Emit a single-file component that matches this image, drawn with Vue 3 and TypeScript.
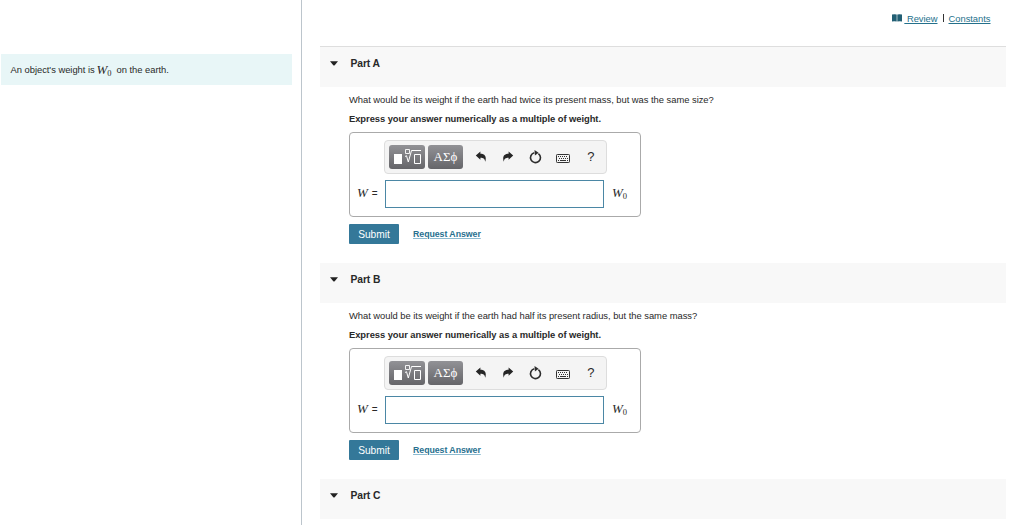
<script setup lang="ts">
interface Part {
  id: string
  question?: string
}

const instruction = 'Express your answer numerically as a multiple of weight.'

const parts: Part[] = [
  { id: 'A', question: 'What would be its weight if the earth had twice its present mass, but was the same size?' },
  { id: 'B', question: 'What would be its weight if the earth had half its present radius, but the same mass?' },
  { id: 'C' },
]
</script>

<template>
  <div class="page">
    <aside class="sidebar">
      <div class="prompt">
        <span class="prompt-start">An object's weight is</span>
        <span class="math"><i>W</i><sub>0</sub></span>
        <span class="prompt-end">on the earth.</span>
      </div>
    </aside>

    <main class="content">
      <nav class="links">
        <svg class="book" width="10" height="8" viewBox="0 0 10 8">
          <path d="M0 .6Q2.6 0 4.7 .6V7.6Q2.6 7 0 7.5ZM5.3 .6Q7.4 0 10 .6V7.5Q7.4 7 5.3 7.6Z" fill="#225f74" />
        </svg>
        <a class="review">&nbsp;Review</a>
        <span class="divider"></span>
        <a class="constants">Constants</a>
      </nav>

      <section v-for="part in parts" :key="part.id" class="part">
        <header class="part-header">
          <svg width="8" height="5" viewBox="0 0 8 5"><path d="M0 .3H8L4.7 4.2Q4 4.8 3.3 4.2Z" fill="#222" /></svg>
          <h2>Part {{ part.id }}</h2>
        </header>

        <div v-if="part.question" class="part-body">
          <p class="question">{{ part.question }}</p>
          <p class="instruction">{{ instruction }}</p>

          <div class="answer-box">
            <div class="toolbar">
              <button class="tool-dark">
                <svg width="36" height="24" viewBox="0 0 36 24" fill="none" stroke="#fff">
                  <path d="M5 9H13V19H5Z" fill="#fff" stroke="none" />
                  <path d="M16.5 4.5H20.5V8.5H16.5Z" stroke-width=".9" />
                  <path d="M16 11.5L17.5 10.7L19.3 17L22.5 5.5H32" stroke-width="1" />
                  <path d="M25.5 9.5H31.5V18.5H25.5Z" stroke-width="1" />
                </svg>
              </button>
              <button class="tool-dark greek">ΑΣϕ</button>
              <div class="tool-icons">
                <svg width="12" height="12" viewBox="0 0 12 12">
                  <path d="M.8 4.6L5.4 .4V2.7C9.6 2.7 11.9 5.2 10.3 10.8C9.6 7.6 8.3 6.8 5.4 6.8V8.8Z" fill="#262626" />
                </svg>
                <svg width="12" height="12" viewBox="0 0 12 12">
                  <path d="M11.2 4.6L6.6 .4V2.7C2.4 2.7 .1 5.2 1.7 10.8C2.4 7.6 3.7 6.8 6.6 6.8V8.8Z" fill="#262626" />
                </svg>
                <svg width="13" height="14" viewBox="0 0 13 14">
                  <path d="M9.4 3.6A5 5 0 1 1 5.3 2.8" fill="none" stroke="#2c2c2c" stroke-width="1.6" />
                  <path d="M5.5 0L9.6 2.7L5.9 5.4Z" fill="#2c2c2c" />
                </svg>
                <svg class="keyboard" width="14" height="9" viewBox="0 0 14 9" fill="none" stroke="#333">
                  <rect x=".5" y=".5" width="13" height="8" rx=".8" />
                  <path d="M2 2.5H12M3 4.5H12" stroke-dasharray="1 1" />
                  <path d="M2 6.5H3M4 6.5H10M11 6.5H12" />
                </svg>
                <span class="help">?</span>
              </div>
            </div>
            <div class="answer-row">
              <span class="label math"><i>W</i><span class="equals">=</span></span>
              <input type="text" class="answer-input">
              <span class="unit math"><i>W</i><sub>0</sub></span>
            </div>
          </div>

          <div class="actions">
            <button class="submit">Submit</button>
            <a class="request">Request Answer</a>
          </div>
        </div>
      </section>
    </main>
  </div>
</template>

<style>
body {
  background: #fff;
  overflow: hidden;
}
</style>

<style scoped>
.page {
  display: flex;
  height: 525px;
  overflow: hidden;
  font-family: "Liberation Sans", Arial, sans-serif;
  font-size: 9.4px;
  letter-spacing: -0.024px;
  color: #292929;
}
.sidebar {
  box-sizing: border-box;
  flex: none;
  width: 302px;
  padding: 54px 9px 0 1px;
  border-right: 1px solid #bcc5cc;
}
.prompt {
  display: flex;
  align-items: center;
  box-sizing: border-box;
  height: 31px;
  padding: 0 0 0 9.5px;
  background: #e8f6f7;
  white-space: nowrap;
}
.prompt-start {
  width: 86px;
}
.prompt .math {
  width: 20px;
  font-size: 13px;
}
.math {
  font-family: "Liberation Serif", "Times New Roman", serif;
  line-height: 14px;
  white-space: nowrap;
}
.math sub {
  font-size: 8.5px;
  line-height: 0;
  vertical-align: -2px;
}
.content {
  flex: none;
  width: 685.5px;
  padding-left: 18px;
}
.links {
  display: flex;
  align-items: center;
  box-sizing: border-box;
  height: 46px;
  padding: 0 15px 10px 0;
  justify-content: flex-end;
}
.links a {
  color: #24708b;
  text-decoration: underline;
  text-underline-offset: 1px;
}
.book {
  margin-right: 2px;
}
.divider {
  width: 1px;
  height: 8px;
  margin: 0 5px;
  background: #333;
}
.part-header {
  display: flex;
  align-items: center;
  gap: 12.5px;
  box-sizing: border-box;
  height: 40px;
  padding: 0 0 7px 10px;
  background: #f8f8f8;
}
.part:first-of-type .part-header {
  height: 41px;
  border-top: 1px solid #dedede;
}
h2 {
  margin: 0;
  font-size: 10.3px;
  letter-spacing: -0.08px;
  line-height: 13px;
}
.part-body {
  box-sizing: border-box;
  height: 176px;
  padding: 6px 0 0 29px;
}
p {
  margin: 0;
  line-height: 13px;
  white-space: nowrap;
}
.instruction {
  margin-top: 6px;
  font-weight: bold;
  letter-spacing: -0.05px;
}
.answer-box {
  box-sizing: border-box;
  width: 292px;
  height: 85px;
  margin-top: 7px;
  padding: 7px 0 0 7px;
  border: 1px solid #aaa;
  border-radius: 4px;
}
.toolbar {
  display: flex;
  align-items: center;
  gap: 3px;
  box-sizing: border-box;
  width: 223px;
  height: 34px;
  margin-left: 27px;
  padding-left: 4px;
  border: 1px solid #ddd;
  border-radius: 4px;
  background: #f4f4f4;
}
.tool-dark {
  width: 36px;
  height: 24px;
  padding: 0;
  border: 0;
  border-radius: 3px;
  background: linear-gradient(#929296, #656569);
  color: #fff;
}
.tool-dark svg {
  display: block;
}
.greek {
  width: 35px;
  padding-bottom: 1px;
  font: 13px/22px "Liberation Serif", "Times New Roman", serif;
}
.tool-icons {
  display: grid;
  grid-template-columns: repeat(5, 27.5px);
  align-items: center;
  justify-items: center;
  width: 138px;
  margin-left: 1px;
}
.keyboard {
  margin-top: 3px;
}
.help {
  font-size: 13px;
  line-height: 16px;
}
.answer-row {
  display: flex;
  align-items: center;
  height: 28px;
  margin-top: 6px;
  font-size: 13px;
}
.label {
  width: 28px;
}
.equals {
  margin-left: 4px;
  font: 10px "Liberation Sans", Arial, sans-serif;
}
.answer-row .math {
  padding-bottom: 2px;
}
.answer-input {
  box-sizing: border-box;
  width: 219px;
  height: 28px;
  padding: 0 4px;
  border: 1px solid #4b87a5;
  background: #fff;
  outline: none;
}
.unit {
  margin-left: 8px;
}
.actions {
  display: flex;
  align-items: center;
  gap: 14px;
  margin-top: 7px;
}
.submit {
  width: 50px;
  height: 20px;
  padding: 0;
  border: 0;
  border-radius: 1px;
  background: #347899;
  color: #fff;
  font: 10.2px "Liberation Sans", Arial, sans-serif;
}
.request {
  color: #28708f;
  font-size: 8.8px;
  letter-spacing: -0.06px;
  font-weight: bold;
  text-decoration: underline;
  text-decoration-color: #8dbbd0;
  text-underline-offset: 1px;
}
</style>
